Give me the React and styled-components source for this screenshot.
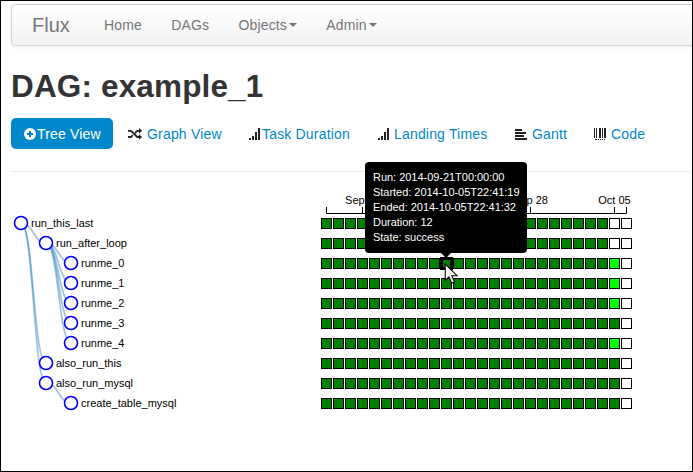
import React from "react";
import styled, { createGlobalStyle } from "styled-components";

const GlobalStyle = createGlobalStyle`
  *, *::before, *::after { box-sizing: border-box; }
  html, body { margin: 0; padding: 0; background: #fff; overflow: hidden; }
  body { font-family: "Liberation Sans", Arial, sans-serif; }
`;

const Window = styled.div`
  width: 693px;
  height: 472px;
  border: 1px solid #000;
  background: #fff;
  overflow: hidden;
  padding: 3px 0 0 10px;
`;

const Navbar = styled.nav`
  display: flex;
  align-items: center;
  height: 42px;
  width: 720px;
  padding-left: 20px;
  border: 1px solid #d4d4d4;
  border-radius: 4px;
  background: linear-gradient(to bottom, #ffffff, #f2f2f2);
  box-shadow: 0 1px 4px rgba(0, 0, 0, 0.065);
  color: #777;
`;

const Brand = styled.a`
  font-size: 20px;
  line-height: 20px;
  width: 72px;
`;

const NavLink = styled.a`
  display: flex;
  align-items: center;
  font-size: 14px;
  line-height: 20px;
  letter-spacing: 0.15px;
  margin-right: 29.3px;
  white-space: nowrap;
`;

const Caret = styled.span`
  margin-left: 2px;
  border-top: 4px solid #777;
  border-left: 4px solid transparent;
  border-right: 4px solid transparent;
`;

const Title = styled.h1`
  margin: 20px 0 0;
  font-size: 31.5px;
  line-height: 40px;
  letter-spacing: 0.15px;
  font-weight: bold;
  color: #333;
`;

const Tabs = styled.div`
  display: flex;
  margin-top: 12px;
  gap: 2px;
`;

const Tab = styled.a`
  display: flex;
  align-items: center;
  height: 31px;
  width: ${(p) => p.$width}px;
  padding: 1px 0 0 12px;
  border-radius: 5px;
  font-size: 14px;
  line-height: 20px;
  letter-spacing: 0.18px;
  white-space: nowrap;
  color: ${(p) => (p.$active ? "#fff" : "#0088cc")};
  background: ${(p) => (p.$active ? "#0088cc" : "transparent")};
`;

const IconBox = styled.svg`
  display: block;
  flex: none;
  width: 14px;
  height: 14px;
  margin-right: ${(p) => p.$gap}px;
  overflow: visible;
`;

const Divider = styled.hr`
  margin: 22px 0 0;
  border: 0;
  border-top: 1px solid #eee;
`;

const Board = styled.div`
  display: flex;
  margin-top: 20px;
`;

const Tree = styled.svg`
  display: block;
  flex: none;
  width: 310px;
  height: 230px;
  font-size: 11px;
`;

const Runs = styled.div`
  position: relative;
  width: 311px;
`;

const Axis = styled.svg`
  display: block;
  width: 330px;
  height: 26px;
  font-size: 11px;
  overflow: visible;
`;

const RunRow = styled.div`
  display: flex;
  gap: 1px;
  height: 11px;
  margin-bottom: 9px;
`;

const fills = { success: "#008000", running: "#00ff00", none: "#ffffff" };

const Cell = styled.span`
  width: 11px;
  height: 11px;
  flex: none;
  border: 1px solid #000;
  background: ${(p) => fills[p.$state]};
  ${(p) => p.$hover && "border-width: 2px; outline: 1px solid #000;"}
`;

const Tooltip = styled.div`
  position: absolute;
  left: 44px;
  top: -30px;
  width: 162px;
  height: 91px;
  padding: 8px;
  border-radius: 4px;
  background: #000;
  color: #fff;
  font-size: 11px;
  line-height: 15px;
  letter-spacing: -0.03px;
  white-space: nowrap;

  &::after {
    content: "";
    position: absolute;
    left: 76px;
    top: 91px;
    border-top: 5px solid #000;
    border-left: 5px solid transparent;
    border-right: 5px solid transparent;
  }
`;

const Cursor = styled.svg`
  position: absolute;
  left: 123px;
  top: 71px;
  width: 15px;
  height: 23px;
`;

function Icon({ name, gap = 0 }) {
  return (
    <IconBox viewBox="0 0 14 14" $gap={gap}>
      {name === "plus" && (
        <>
          <circle cx="7" cy="7" r="6" fill="#fff" />
          <path d="M6 4h2v2h2v2H8v2H6V8H4V6h2z" fill="#08c" />
        </>
      )}
      {name === "shuffle" && (
        <g transform="translate(1 0)">
          <path d="M0 3.8h3L9.3 10H12M0 10h3l1.8-1.8M7 6l2.3-2.2H12" fill="none" stroke="#222" strokeWidth="1.8" />
          <path d="M11 1l3.2 2.8L11 6.6zM11 7.2l3.2 2.8-3.2 2.8z" fill="#222" />
        </g>
      )}
      {name === "signal" && (
        <path d="M1 11h2v2H1zM4 9h2v4H4zM7 5h2v8H7zM10 1h2v12h-2z" fill="#222" />
      )}
      {name === "align" && (
        <path d="M1 2h7v2H1zM1 5h11v2H1zM1 8h9v2H1zM1 11h12v2H1z" fill="#222" />
      )}
      {name === "barcode" && (
        <path d="M1 1h1v10H1zM3 1h1v10H3zM6 1h2v10H6zM9 1h1v10H9zM11 1h2v10h-2zM2 12h2v1H2zM5 12h1v1H5zM7 12h1v1H7zM9 12h1v1H9zM11 12h1v1h-1z" fill="#222" />
      )}
    </IconBox>
  );
}

const tasks = [
  ["run_this_last", 0],
  ["run_after_loop", 1],
  ["runme_0", 2],
  ["runme_1", 2],
  ["runme_2", 2],
  ["runme_3", 2],
  ["runme_4", 2],
  ["also_run_this", 1],
  ["also_run_mysql", 1],
  ["create_table_mysql", 2],
];

const links = [[0, 1], [0, 7], [0, 8], [1, 2], [1, 3], [1, 4], [1, 5], [1, 6], [8, 9]];

const nodeX = (i) => 10 + tasks[i][1] * 25;
const nodeY = (i) => 31 + i * 20;

function linkPath([a, b]) {
  const mid = (nodeX(a) + nodeX(b)) / 2;
  return `M${nodeX(a)},${nodeY(a)}C${mid},${nodeY(a)} ${mid},${nodeY(b)} ${nodeX(b)},${nodeY(b)}`;
}

function stateOf(row, col) {
  if (col === 25) return "none";
  if (col < 24) return "success";
  if (row < 2) return "none";
  return [2, 3, 4, 6].includes(row) ? "running" : "success";
}

const columns = Array.from({ length: 26 }, (_, i) => i);

export default function App() {
  return (
    <>
      <GlobalStyle />
      <Window>
        <Navbar>
          <Brand>Flux</Brand>
          <NavLink>Home</NavLink>
          <NavLink>DAGs</NavLink>
          <NavLink>Objects<Caret /></NavLink>
          <NavLink>Admin<Caret /></NavLink>
        </Navbar>
        <Title>DAG: example_1</Title>
        <Tabs>
          <Tab $active $width={102}><Icon name="plus" />Tree View</Tab>
          <Tab $width={119}><Icon name="shuffle" gap={6} />Graph View</Tab>
          <Tab $width={127}><Icon name="signal" />Task Duration</Tab>
          <Tab $width={135}><Icon name="signal" gap={3} />Landing Times</Tab>
          <Tab $width={77}><Icon name="align" gap={4} />Gantt</Tab>
          <Tab $width={77}><Icon name="barcode" gap={4} />Code</Tab>
        </Tabs>
        <Divider />
        <Board>
          <Tree>
            <g fill="none" stroke="#1f77b4" strokeOpacity="0.43" strokeWidth="1.7">
              {links.map((l) => <path key={l.join()} d={linkPath(l)} />)}
            </g>
            {tasks.map(([name], i) => (
              <g key={name}>
                <circle cx={nodeX(i)} cy={nodeY(i)} r="6.5" fill="#fff" stroke="#0000ff" strokeWidth="1.6" />
                <text x={nodeX(i) + 10} y={nodeY(i) + 4}>{name}</text>
              </g>
            ))}
          </Tree>
          <Runs>
            <Axis>
              <path d="M5.5 15v6.5h300V15M41.5 15v6M125.5 15v6M209.5 15v6M293.5 15v6" fill="none" stroke="#000" />
              <g textAnchor="middle">
                <text x="41.5" y="12">Sep 14</text>
                <text x="209.5" y="12">Sep 28</text>
                <text x="293.5" y="12">Oct 05</text>
              </g>
            </Axis>
            {tasks.map(([name], row) => (
              <RunRow key={name}>
                {columns.map((col) => (
                  <Cell key={col} $state={stateOf(row, col)} $hover={row === 2 && col === 10} />
                ))}
              </RunRow>
            ))}
            <Tooltip>
              <div>Run: 2014-09-21T00:00:00</div>
              <div>Started: 2014-10-05T22:41:19</div>
              <div>Ended: 2014-10-05T22:41:32</div>
              <div>Duration: 12</div>
              <div>State: success</div>
            </Tooltip>
            <Cursor viewBox="0 0 14 22">
              <path d="M1 1v15.5l3.6-3.3 2.6 6 2.7-1.1-2.6-6h5z" fill="#fff" stroke="#000" />
            </Cursor>
          </Runs>
        </Board>
      </Window>
    </>
  );
}
